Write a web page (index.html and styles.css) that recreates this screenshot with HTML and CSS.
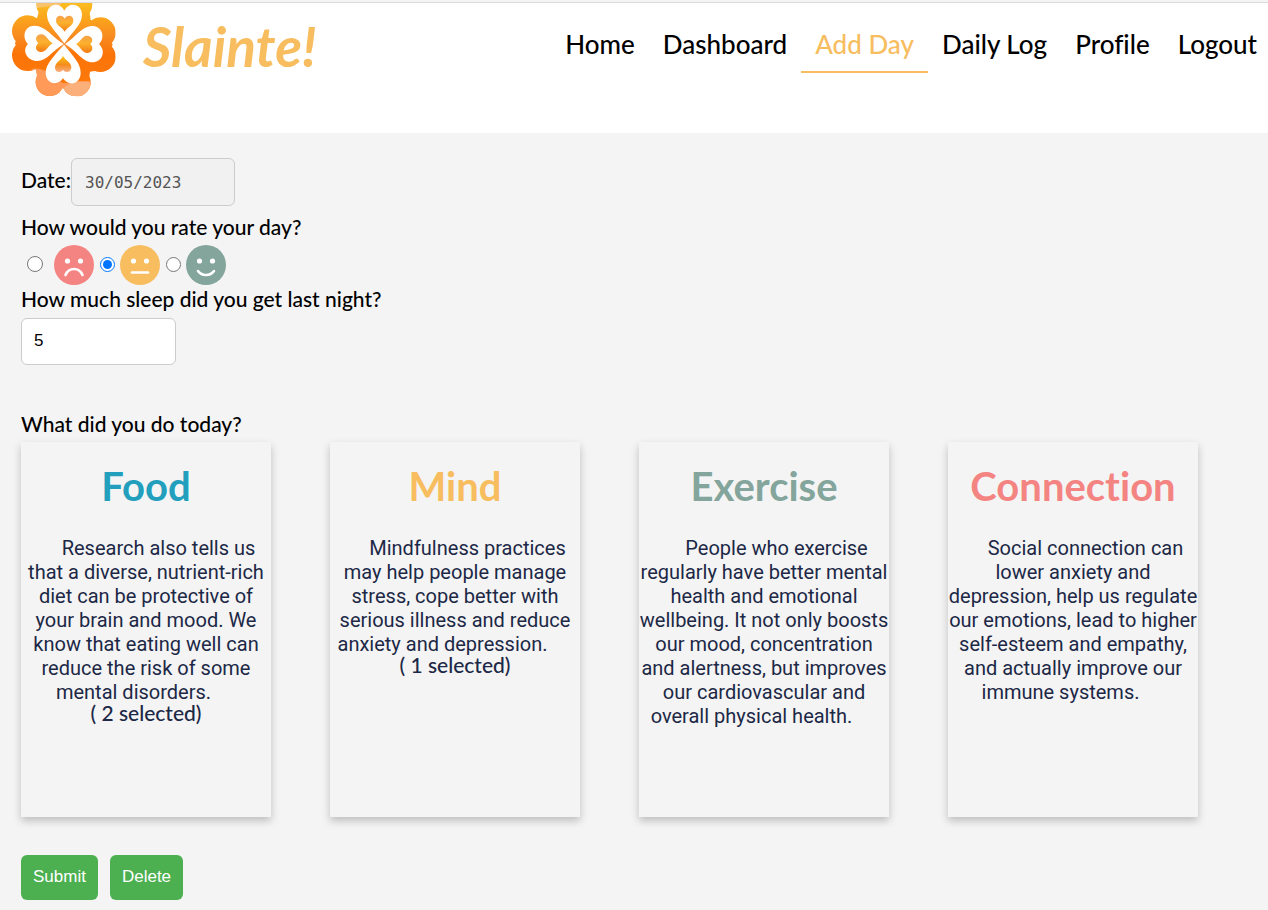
FILE: index.html
```html
<!DOCTYPE html>
<html lang="en">
<head>
<meta charset="utf-8">
<meta name="viewport" content="width=device-width, initial-scale=1">
<title>Slainte! - Add Day</title>
<link rel="stylesheet" href="styles.css">
</head>
<body>
<header class="header">
  <a class="brand" href="#">
    <svg class="logo" viewBox="0 9 375 306" aria-hidden="true">
      <defs>
        <linearGradient id="petal" x1="0" y1="9" x2="0" y2="290" gradientUnits="userSpaceOnUse">
          <stop offset="0" stop-color="#fbbd22"/>
          <stop offset=".16" stop-color="#fba51c"/>
          <stop offset=".36" stop-color="#f88a20"/>
          <stop offset=".55" stop-color="#fa7408"/>
          <stop offset="1" stop-color="#ff7a0a"/>
        </linearGradient>
        <linearGradient id="seed" x1="0" y1="0" x2="0" y2="1">
          <stop offset="0" stop-color="#f6a04a"/>
          <stop offset=".45" stop-color="#fbb12c"/>
          <stop offset="1" stop-color="#f47a12"/>
        </linearGradient>
        <linearGradient id="seed-low" x1="0" y1="0" x2="0" y2="1">
          <stop offset="0" stop-color="#fbc414"/>
          <stop offset=".55" stop-color="#f58c1c"/>
          <stop offset="1" stop-color="#f9ad80"/>
        </linearGradient>
        <clipPath id="clover">
          <circle cx="83" cy="93" r="47"/><circle cx="83" cy="166" r="47"/>
          <circle cx="301" cy="98" r="46"/><circle cx="301" cy="170" r="46"/>
          <circle cx="149" cy="246" r="42"/><circle cx="229" cy="246" r="43"/>
          <circle cx="153" cy="14" r="44"/><circle cx="233" cy="14" r="44"/>
          <path d="M118 30H268L272 60L310 70L338 134L300 210L270 215L265 250L189 265L115 250L108 208L70 200L45 130L70 60L110 58Z"/>
        </clipPath>
      </defs>
      <g clip-path="url(#clover)">
        <rect y="0" width="375" height="315" fill="url(#petal)"/>
        <path d="M110 0H193L178 18Q140 18 110 24Z" fill="#f8c36c"/>
        <path d="M95 206Q125 204 150 220L189 250L235 243H280V315H95Z" fill="#ff9a58"/>
        <path d="M189 266Q210 244 235 245L280 248V315H180Z" fill="#fbb07c"/>
      </g>
      <g fill="#fff">
        <path d="M193 131C170 94 141 75 141 44C141 12 179 3 193 32C207 3 246 12 246 44C246 75 216 94 193 131Z"/>
        <path d="M191 132C158 152 140 183 112 183C82 183 64 152 84 132C64 111 74 76 104 77C137 78 156 110 191 132Z"/>
        <path d="M195 132C230 109 245 80 274 78C304 76 319 110 297 132C320 154 306 187 277 187C248 187 232 154 195 132Z"/>
        <path d="M191 133C218 168 243 190 242 220C241 252 207 261 189 235C170 261 138 250 137 220C136 191 165 168 191 133Z"/>
      </g>
      <path fill="url(#seed)" d="M194 95C186 80 168 78 168 61C168 45 187 43 194 56C201 43 220 45 220 61C220 78 203 80 194 95Z"/>
      <path fill="url(#seed)" d="M158 130C143 139 139 156 123 156C107 156 103 139 115 130C103 119 108 103 123 103C140 103 143 122 158 130Z"/>
      <path fill="url(#seed)" d="M228 132C243 124 246 107 261 107C277 107 282 123 271 132C283 143 276 159 262 159C247 159 242 142 228 132Z"/>
      <path fill="url(#seed-low)" d="M189 168C198 183 215 188 214 203C213 217 196 220 189 209C182 220 165 217 165 203C165 188 181 183 189 168Z"/>
      <path d="M178 116L208 148M208 116L178 148" stroke="#f59b45" stroke-width="3"/>
    </svg>
    <span class="brand-name">Slainte!</span>
  </a>
  <nav class="nav" aria-label="Main">
    <a class="nav-link" href="#">Home</a>
    <a class="nav-link" href="#">Dashboard</a>
    <a class="nav-link nav-link-active" href="#" aria-current="page">Add Day</a>
    <a class="nav-link" href="#">Daily Log</a>
    <a class="nav-link" href="#">Profile</a>
    <a class="nav-link" href="#">Logout</a>
  </nav>
</header>
<main>
  <form class="day-form">
    <div class="date-row">
      <label class="label" for="date">Date:</label>
      <input class="field date-field" id="date" type="text" value="30/05/2023" disabled>
    </div>
    <fieldset class="rating">
      <legend class="label">How would you rate your day?</legend>
      <div class="faces">
        <input class="radio radio-first" type="radio" name="rating" id="bad" value="bad">
        <label class="face" for="bad" aria-label="Bad">
          <svg viewBox="0 0 40 40"><circle cx="20" cy="20" r="20" fill="#f48482"/><circle cx="13.500" cy="16" r="2.600" fill="#fff"/><circle cx="26.500" cy="16" r="2.600" fill="#fff"/><path d="M11.500 30Q14 24 20 24T28.500 30" fill="none" stroke="#fff" stroke-width="2.600" stroke-linecap="round"/></svg>
        </label>
        <input class="radio" type="radio" name="rating" id="okay" value="okay" checked>
        <label class="face" for="okay" aria-label="Okay">
          <svg viewBox="0 0 40 40"><circle cx="20" cy="20" r="20" fill="#f7bd5f"/><circle cx="13.500" cy="16" r="2.600" fill="#fff"/><circle cx="26.500" cy="16" r="2.600" fill="#fff"/><path d="M12 27.500H28" fill="none" stroke="#fff" stroke-width="2.600" stroke-linecap="round"/></svg>
        </label>
        <input class="radio" type="radio" name="rating" id="good" value="good">
        <label class="face" for="good" aria-label="Good">
          <svg viewBox="0 0 40 40"><circle cx="20" cy="20" r="20" fill="#84a59c"/><circle cx="13.500" cy="16" r="2.600" fill="#fff"/><circle cx="26.500" cy="16" r="2.600" fill="#fff"/><path d="M12 26Q15 30 20 30T28 26" fill="none" stroke="#fff" stroke-width="2.600" stroke-linecap="round"/></svg>
        </label>
      </div>
    </fieldset>
    <label class="label" for="sleep">How much sleep did you get last night?</label>
    <input class="field sleep-field" id="sleep" type="text" inputmode="numeric" value="5">
    <h2 class="label activities-title">What did you do today?</h2>
    <div class="cards">
      <section class="card">
        <h3 class="card-title food">Food</h3>
        <p class="card-text">Research also tells us that a diverse, nutrient-rich diet can be protective of your brain and mood. We know that eating well can reduce the risk of some mental disorders.</p>
        <p class="selected">( 2 selected)</p>
      </section>
      <section class="card">
        <h3 class="card-title mind">Mind</h3>
        <p class="card-text">Mindfulness practices may help people manage stress, cope better with serious illness and reduce anxiety and depression.</p>
        <p class="selected">( 1 selected)</p>
      </section>
      <section class="card">
        <h3 class="card-title exercise">Exercise</h3>
        <p class="card-text">People who exercise regularly have better mental health and emotional wellbeing. It not only boosts our mood, concentration and alertness, but improves our cardiovascular and overall physical health.</p>
      </section>
      <section class="card">
        <h3 class="card-title connection">Connection</h3>
        <p class="card-text">Social connection can lower anxiety and depression, help us regulate our emotions, lead to higher self-esteem and empathy, and actually improve our immune systems.</p>
      </section>
    </div>
    <div class="actions">
      <button class="button" type="submit">Submit</button>
      <button class="button" type="button">Delete</button>
    </div>
  </form>
</main>
</body>
</html>
```
FILE: styles.css
```css
* {
  box-sizing: border-box;
}

html {
  background: #fff;
}

body {
  display: flow-root;
  min-height: 100vh;
  margin: 0;
  background: #f4f4f4;
  color: #000;
  font-family: Lato, sans-serif;
  font-variant-ligatures: none;
}

.header {
  display: flex;
  justify-content: space-between;
  align-items: flex-start;
  height: 131px;
  margin-top: 2px;
  border-top: 1px solid #d9dadd;
  background: #fff;
}

.brand {
  display: flex;
  align-items: flex-start;
  gap: 18px;
  color: #f7bd5f;
  text-decoration: none;
}

.logo {
  display: block;
  width: 125px;
  height: 102px;
}

.brand-name {
  padding-top: 11px;
  font-size: 55px;
  line-height: 64px;
  font-style: italic;
  font-weight: 700;
}

.nav {
  display: flex;
  padding-top: 16px;
}

.nav-link {
  padding: 10px 14px 12px;
  border-bottom: 2px solid transparent;
  color: #000;
  font-size: 26px;
  line-height: 30px;
  font-weight: 500;
  text-decoration: none;
  white-space: nowrap;
}

.nav-link:last-child {
  padding-right: 11px;
}

.nav-link-active {
  border-color: #f7bd5f;
  color: #f7bd5f;
}

.day-form {
  padding: 25px 21px 10px;
}

.label {
  display: block;
  margin: 0;
  padding: 0;
  font-size: 21px;
  line-height: 24px;
  font-weight: 500;
}

.date-row {
  display: flex;
  align-items: center;
}

.date-row .label {
  padding-bottom: 4px;
}

.field {
  display: block;
  padding: 12px;
  border: 1px solid #ccc;
  border-radius: 6px;
}

.date-field {
  width: 164px;
  height: 48px;
  padding-left: 13px;
  background: #f1f1f1;
  color: #545454;
  font-family: "DejaVu Sans Mono", monospace;
  font-size: 16px;
}

.rating {
  margin: 0;
  padding: 9px 0 0;
  border: 0;
}

.rating legend {
  float: left;
  width: 100%;
}

.faces {
  display: flex;
  clear: both;
  align-items: center;
  padding: 6px 0 2px;
}

.radio {
  width: 15px;
  height: 15px;
  margin: 0 5px 2px 6px;
}

.radio-first {
  width: 16px;
  height: 16px;
  margin-right: 11px;
}

.face,
.face svg {
  display: block;
  width: 40px;
  height: 40px;
}

.sleep-field {
  width: 155px;
  height: 47px;
  margin-top: 7px;
  padding-bottom: 14px;
  background: #fff;
  color: #000;
  font-family: "Liberation Sans", Arial, sans-serif;
  font-size: 17px;
}

.activities-title {
  margin-top: 47px;
}

.cards {
  display: flex;
  flex-wrap: wrap;
  gap: 38px 59px;
  padding-top: 6px;
}

.card {
  width: 250px;
  min-height: 375px;
  padding-top: 20px;
  box-shadow: 0 4px 8px rgba(0, 0, 0, 0.22);
  color: #1c2846;
  text-align: center;
}

.card-title {
  margin: 0;
  font-size: 40px;
  line-height: 48px;
  font-weight: 700;
}

.card-text {
  margin: 26px 0 0;
  font-family: Roboto, sans-serif;
  font-size: 20px;
  line-height: 24px;
  text-indent: 25px;
}

.card-text::after {
  display: inline-block;
  width: 25px;
  content: "";
}

.selected {
  margin: 0;
  font-size: 21px;
  line-height: 18px;
  font-weight: 500;
}

.food {
  color: #219fbd;
}

.mind {
  color: #f7bd5f;
}

.exercise {
  color: #84a59c;
}

.connection {
  color: #f48482;
}

.actions {
  display: flex;
  gap: 12px;
  padding-top: 38px;
}

.button {
  padding: 13px 12px 14px;
  border: 0;
  border-radius: 6px;
  background: #4caf50;
  color: #fff;
  font-family: "Liberation Sans", Arial, sans-serif;
  font-size: 17px;
  line-height: 18px;
}
```
